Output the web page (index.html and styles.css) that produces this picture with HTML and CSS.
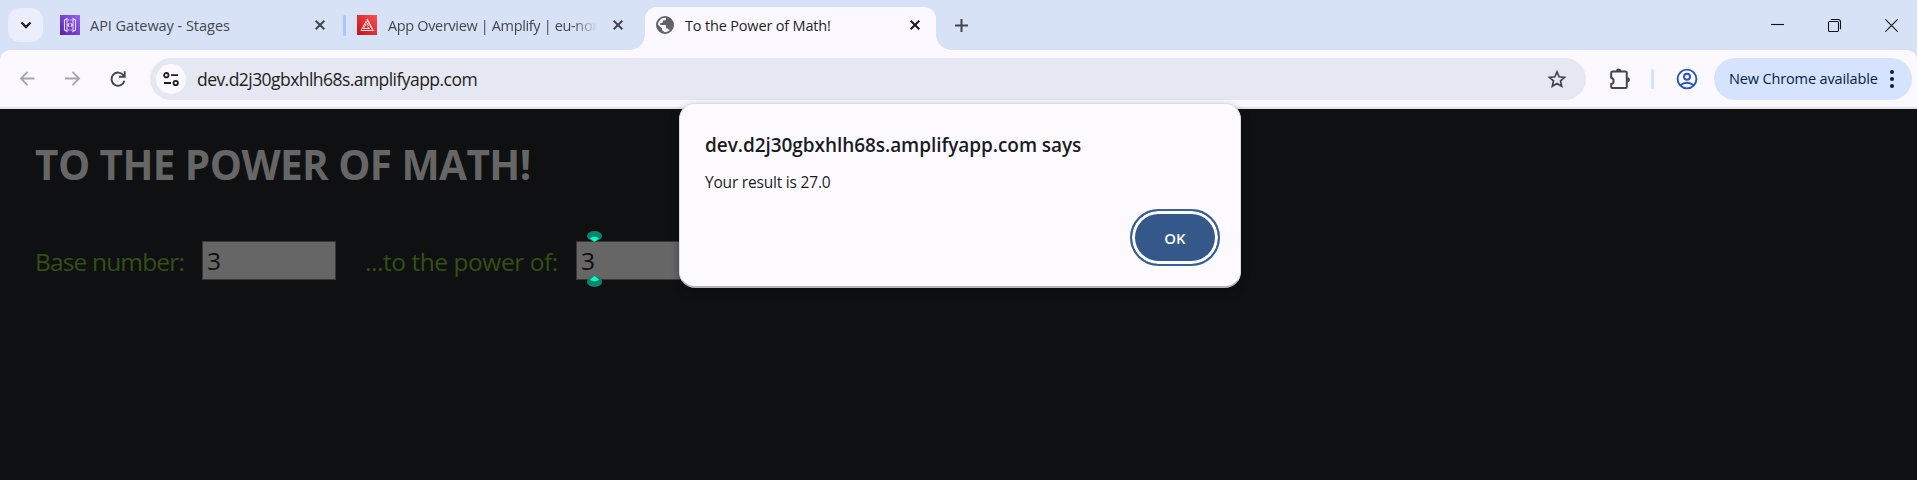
FILE: index.html
```html
<!DOCTYPE html>
<html lang="en">
<head>
<meta charset="utf-8">
<title>To the Power of Math!</title>
<link rel="stylesheet" href="styles.css">
</head>
<body>
<header class="tabstrip">
  <div class="tab-search"><svg width="12" height="8" viewBox="0 0 12 8"><path d="M1.500 1.500 6 6l4.500-4.500" fill="none" stroke="#1b1b1f" stroke-width="2.300"/></svg></div>
  <div class="tab tab-first">
    <svg class="favicon" viewBox="0 0 20 20"><defs><linearGradient id="violet" x1="0" y1="1" x2="1" y2="0"><stop stop-color="#5227a8"/><stop offset="1" stop-color="#9a5ff5"/></linearGradient></defs><path fill="url(#violet)" d="M0 0h20v20H0z"/><path d="M7 3.500 4.500 5v10L7 16.500zM13 3.500 15.500 5v10L13 16.500zM9.200 8 8 10l1.200 2M10.800 8 12 10l-1.200 2" fill="none" stroke="#e5d8ff" stroke-width="1.100"/><path d="M8 5h4M8 15h4" fill="none" stroke="#e5d8ff" stroke-width="1" stroke-dasharray="1 .6"/></svg>
    <span class="tab-title t1">API Gateway - Stages</span>
    <svg class="close" viewBox="0 0 10 10"><path d="m.7.7 8.600 8.600m0-8.600L.7 9.300"/></svg>
  </div>
  <i class="tab-divider"></i>
  <div class="tab tab-second">
    <svg class="favicon" viewBox="0 0 20 20"><defs><linearGradient id="crimson" x1="0" y1="1" x2="1" y2="0"><stop stop-color="#c3111b"/><stop offset="1" stop-color="#fa5053"/></linearGradient></defs><path fill="url(#crimson)" d="M0 0h20v20H0z"/><path d="M4 15.500 9 6.500l2.500 4.500M6.500 13.500h6M9 9l-2.500 4.500M9.500 4.500l1-.3 5.800 11.300H4M10 5l4.800 9M10.500 11.500l1.500 2" fill="none" stroke="#ffe3e3" stroke-width="1"/></svg>
    <span class="tab-title t2">App Overview | Amplify | eu-nor</span>
    <svg class="close" viewBox="0 0 10 10"><path d="m.7.7 8.600 8.600m0-8.600L.7 9.300"/></svg>
  </div>
  <div class="tab tab-active">
    <svg class="globe" viewBox="0 0 18 18"><circle cx="9" cy="9" r="8.100" fill="#fbf9ff" stroke="#5f6368" stroke-width="1.800"/><path fill="#5f6368" d="M10 1.500v1.300c0 1-.8 1.700-1.700 1.700H6.700v1.700c0 .5-.4.900-.9.900H4.200V9h5c.5 0 .9.400.9.900v2.500h.9c.8 0 1.400.5 1.600 1.200l1.900.4c1.600-1.400 2.500-3.100 2.500-5.200C17 5 14 1.800 10 1.500zM1.300 8l4.800 4.600v.9c0 1 .8 1.700 1.700 1.700V17C4 16.500 1 13.200 1 9.200z"/></svg>
    <span class="tab-title t3">To the Power of Math!</span>
    <svg class="close" viewBox="0 0 10 10"><path d="m.7.7 8.600 8.600m0-8.600L.7 9.300"/></svg>
  </div>
  <svg class="plus" viewBox="0 0 13 13"><path d="M6.500 0v13M0 6.500h13"/></svg>
  <div class="window-controls">
    <svg width="13" height="13" viewBox="0 0 13 13"><path d="M0 5.500h13"/></svg>
    <svg width="13" height="13" viewBox="0 0 13 13"><rect x=".5" y="2.500" width="10" height="10" rx="1.200"/><path d="M2.800.5h7.200a2.500 2.500 0 0 1 2.500 2.500v7.200"/></svg>
    <svg width="13" height="13" viewBox="0 0 13 13"><path d="m.4.4 12.200 12.200m0-12.200L.4 12.600"/></svg>
  </div>
</header>
<div class="toolbar-back">
<nav class="toolbar">
  <svg class="arrow" viewBox="0 0 16 16"><path d="M15.500 8H1.500M8 1 1 8l7 7"/></svg>
  <svg class="arrow" viewBox="0 0 16 16"><path d="M0 8h14M8 1l7 7-7 7"/></svg>
  <svg class="reload" viewBox="0 0 16 16"><path d="M13.600 4.500A6.600 6.600 0 1 0 14.500 9.800M14.700.3v5.400H9" fill="none" stroke="#42474e" stroke-width="1.900"/></svg>
  <div class="omnibox">
    <div class="site-info"><svg width="16" height="14" viewBox="0 0 16 14"><g fill="none" stroke="#1f1f23" stroke-width="1.800"><circle cx="3.300" cy="3.200" r="2.200"/><circle cx="12.700" cy="11" r="2.200"/><path d="M8 3.200h7M1 11h7"/></g></svg></div>
    <span class="url">dev.d2j30gbxhlh68s.amplifyapp.com</span>
    <svg class="star" viewBox="0 0 20 20"><path d="m10 2.800 2.150 5 5.450.5-4.100 3.600 1.200 5.300L10 14.400l-4.700 2.800 1.200-5.300-4.100-3.600 5.450-.5z" fill="none" stroke="#42474e" stroke-width="1.700"/></svg>
  </div>
  <svg class="puzzle" viewBox="0 0 22 22"><path d="M3.500 3.500h13a1.300 1.300 0 0 1 1.300 1.300v14a1.300 1.300 0 0 1-1.300 1.300h-13a1.300 1.300 0 0 1-1.300-1.300V16a3.200 3.200 0 0 0 0-6.200V4.800a1.300 1.300 0 0 1 1.300-1.300z" fill="none" stroke="#42474e" stroke-width="2"/><path d="M7 3a2.600 2.600 0 0 1 5.200 0zM18.400 9.300a2.500 2.500 0 0 1 0 5z" fill="#42474e"/></svg>
  <i class="toolbar-divider"></i>
  <svg class="profile" viewBox="0 0 22 22"><g fill="none" stroke="#2455bd" stroke-width="1.900"><circle cx="11" cy="11" r="9.400"/><circle cx="11" cy="8.700" r="3"/><path d="M4.500 17.300c3.800-3.400 9.200-3.400 13 0"/></g></svg>
  <div class="update"><span>New Chrome available</span><svg width="4" height="20" viewBox="0 0 4 20" fill="#041e49"><circle cx="2" cy="3" r="2"/><circle cx="2" cy="10" r="2"/><circle cx="2" cy="17" r="2"/></svg></div>
</nav>
</div>
<main class="page">
  <h1>TO THE POWER OF MATH!</h1>
  <div class="form">
    <label class="base">Base number:</label>
    <div class="field">3</div>
    <label class="power">...to the power of:</label>
    <div class="field">3
      <svg class="handle above" viewBox="0 0 15 11"><ellipse cx="7.500" cy="5" rx="7.500" ry="5" fill="#0b856b"/><path d="M3 7.500C5 5.200 10 5.200 12 7.500L7.500 11z" fill="#00ffc5"/></svg>
      <svg class="handle below" viewBox="0 0 15 11"><ellipse cx="7.500" cy="6" rx="7.500" ry="5" fill="#0b856b"/><path d="M3 3.500C5 5.800 10 5.800 12 3.500L7.500 0z" fill="#00ffc5"/></svg>
    </div>
  </div>
</main>
<section class="dialog">
  <h2>dev.d2j30gbxhlh68s.amplifyapp.com says</h2>
  <p>Your result is 27.0</p>
  <div class="ok">OK</div>
</section>
</body>
</html>
```
FILE: styles.css
```css
* { box-sizing: border-box; }
body { margin: 0; width: 1917px; height: 480px; overflow: hidden; background: #0e1011; font-family: "Open Sans", "Noto Sans", sans-serif; position: relative; }
svg { display: block; flex: none; overflow: visible; }
.tabstrip { height: 50px; display: flex; align-items: center; background: #d8e2f6; padding-left: 8px; }
.tab-search { width: 35px; height: 34px; border-radius: 12px; background: #ebeffd; display: flex; align-items: center; justify-content: center; }
.tab { display: flex; align-items: center; height: 43px; }
.tab-first { width: 300px; padding-left: 17px; }
.tab-second { width: 299px; padding-left: 11px; }
.tab-divider { width: 3px; height: 21px; border-radius: 2px; background: #a8c7fa; }
.tab-active { position: relative; width: 291px; align-self: flex-end; padding: 0 0 7px 11px; background: #fbf9ff; border-radius: 12px 12px 0 0; }
.tab-active::before, .tab-active::after { content: ""; position: absolute; bottom: 0; width: 15px; height: 15px; }
.tab-active::before { left: -15px; background: radial-gradient(circle at 0 0, transparent 14.500px, #fbf9ff 15px); }
.tab-active::after { right: -15px; background: radial-gradient(circle at 100% 0, transparent 14.500px, #fbf9ff 15px); }
.favicon { width: 20px; height: 20px; margin-right: 10px; }
.tab-title { font-size: 14.500px; line-height: 20px; padding-top: 1px; color: #42474e; white-space: nowrap; flex: none; }
.t1 { width: 225px; letter-spacing: -.03px; }
.t2 { width: 210px; margin-right: 15px; letter-spacing: -.35px; -webkit-mask-image: linear-gradient(90deg, #000 185px, transparent 209px); mask-image: linear-gradient(90deg, #000 185px, transparent 209px); }
.tab-second .favicon { margin-right: 11px; }
.t3 { width: 225px; color: #1f1f23; letter-spacing: -.17px; }
.close { width: 10px; height: 10px; stroke: #42474e; stroke-width: 2; }
.tab-active .close { stroke: #1b1b1f; }
.globe { width: 18px; height: 18px; margin-right: 11px; }
.plus { width: 13px; height: 13px; margin-left: 19px; stroke: #42474e; stroke-width: 2; }
.window-controls { display: flex; gap: 44px; margin-left: auto; padding-right: 19px; }
.window-controls svg { fill: none; stroke: #111318; stroke-width: 1.100; }
.toolbar-back { background: #d8e2f6; }
.toolbar { height: 59px; display: flex; align-items: center; background: #fbf9ff; border-bottom: 2px solid #e1e2ea; border-radius: 10px 10px 0 0; padding-left: 20px; }
.arrow { width: 15px; height: 15px; margin-right: 30px; fill: none; stroke: #a4a6ad; stroke-width: 2; }
.reload { width: 16px; height: 16px; margin-right: 24px; }
.omnibox { width: 1436px; height: 42px; border-radius: 21px; background: #e5e7f2; display: flex; align-items: center; padding: 0 19px 0 6px; }
.site-info { width: 30px; height: 30px; border-radius: 50%; background: #fbf9ff; display: flex; align-items: center; justify-content: center; margin-right: 11px; flex: none; }
.url { font-size: 17.500px; line-height: 24px; padding-top: 1px; letter-spacing: -.55px; color: #1f1f23; white-space: nowrap; }
.star { width: 20px; height: 20px; margin-left: auto; }
.puzzle { width: 22px; height: 22px; margin-left: 23px; }
.toolbar-divider { width: 3px; height: 20px; margin-left: 20px; border-radius: 2px; background: #d3e3fd; }
.profile { width: 22px; height: 22px; margin-left: 22px; }
.update { width: 198px; height: 42px; margin-left: 16px; border-radius: 21px; background: #d5e3ff; display: flex; align-items: center; justify-content: space-between; padding: 0 18px 0 15px; font-size: 14.500px; letter-spacing: -.14px; color: #041e49; white-space: nowrap; }
.page { padding: 29px 35px; }
h1 { margin: 0; font-size: 40.500px; line-height: 54px; font-weight: 700; color: #666; white-space: nowrap; letter-spacing: -.57px; }
.form { display: flex; margin-top: 49px; height: 39px; align-items: center; font-size: 24.500px; line-height: 34px; color: #344f16; }
.form label { white-space: nowrap; flex: none; padding-top: 3px; }
.base { width: 167px; letter-spacing: -.85px; }
.power { width: 211px; letter-spacing: -.45px; }
.field { position: relative; width: 134px; height: 39px; flex: none; background: #666; border: 1px solid #383838; padding: 2px 4px; color: #0e1011; margin-right: 29px; }
.handle { position: absolute; left: 10px; width: 15px; height: 11px; }
.above { top: -11px; }
.below { bottom: -8px; }
.dialog { position: absolute; left: 679px; top: 103px; width: 562px; height: 185px; background: #fdfbff; border: 1px solid #dcdde2; border-bottom: 2px solid #b3b5b8; border-radius: 16px; padding: 26px 20px 20px 25px; box-shadow: 0 3px 8px rgba(0,0,0,.35); display: flex; flex-direction: column; }
h2 { margin: 0; font-size: 19px; line-height: 30px; font-weight: 600; letter-spacing: -.06px; color: #1b1b1f; white-space: nowrap; }
p { margin: 11px 0 0; font-size: 15.500px; line-height: 22px; letter-spacing: -.2px; color: #1b1b1f; }
.ok { width: 90px; height: 58px; margin: 16px 0 0 auto; display: flex; align-items: center; justify-content: center; border: 2px solid #385f9a; border-radius: 29px; background: #335889; box-shadow: inset 0 0 0 3px #fff; color: #fff; font-size: 15px; font-weight: 600; }
```
